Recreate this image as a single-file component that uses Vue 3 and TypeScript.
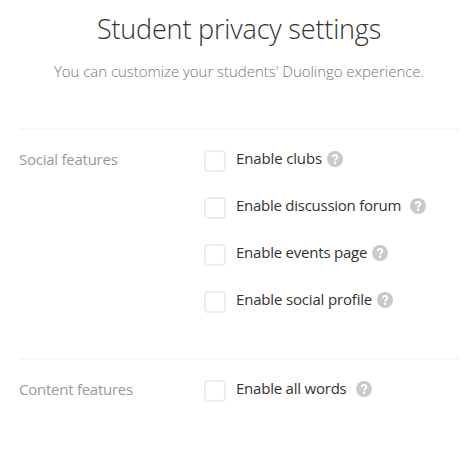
<script setup lang="ts">
interface Option {
  id: string
  label: string
  spaced?: boolean
}

interface Section {
  title: string
  options: Option[]
}

const sections: Section[] = [
  {
    title: 'Social features',
    options: [
      { id: 'clubs', label: 'Enable clubs' },
      { id: 'forum', label: 'Enable discussion forum', spaced: true },
      { id: 'events', label: 'Enable events page' },
      { id: 'profile', label: 'Enable social profile' },
    ],
  },
  {
    title: 'Content features',
    options: [{ id: 'words', label: 'Enable all words', spaced: true }],
  },
]
</script>

<template>
  <main class="page">
    <h1 class="title">Student privacy settings</h1>
    <p class="subtitle">You can customize your students' Duolingo experience.</p>
    <section v-for="section in sections" :key="section.title" class="section">
      <h2 class="section-title">{{ section.title }}</h2>
      <div class="options">
        <div v-for="option in section.options" :key="option.id" class="option">
          <input :id="option.id" type="checkbox" class="box" />
          <label :for="option.id" class="label" :class="[option.id, { spaced: option.spaced }]">{{ option.label }}</label>
          <svg class="help" viewBox="0 0 16 16" aria-hidden="true">
            <circle cx="8" cy="8" r="8" fill="#c9c9c9" />
            <path d="M5.7 6.2C5.8 4.7 6.6 4 8 4c1.4 0 2.3.8 2.3 2 0 1.7-2.2 1.7-2.2 3.5" fill="none" stroke="#fff" stroke-width="2" />
            <circle cx="8.1" cy="11.8" r="1.25" fill="#fff" />
          </svg>
        </div>
      </div>
    </section>
  </main>
</template>

<style>
body {
  background: #fff;
}
</style>

<style scoped>
.page {
  box-sizing: border-box;
  width: 467px;
  height: 459px;
  padding: 12px 8px 0 19px;
  overflow: hidden;
  font-family: 'Open Sans', 'Noto Sans', sans-serif;
  color: #333;
}

.title {
  margin: 0;
  font-size: 27px;
  font-weight: 300;
  line-height: 34px;
  letter-spacing: -0.17px;
  text-align: center;
  white-space: nowrap;
}

.subtitle {
  margin: 14px 0 0;
  font-size: 15px;
  font-weight: 300;
  line-height: 22px;
  letter-spacing: -0.04px;
  text-align: center;
  white-space: nowrap;
  color: #777;
}

.section {
  display: flex;
  height: 228px;
  border-top: 2px solid #f7f7f7;
}

.subtitle + .section {
  margin-top: 46px;
}

.section-title {
  width: 185px;
  margin: 18px 0 0;
  font-size: 15px;
  font-weight: 400;
  line-height: 22px;
  letter-spacing: -0.25px;
  color: #999;
}

.options {
  display: flex;
  flex-direction: column;
  gap: 25px;
  padding-top: 20px;
}

.option {
  display: flex;
  align-items: flex-start;
  height: 22px;
}

.box {
  flex: none;
  box-sizing: border-box;
  width: 22px;
  height: 22px;
  margin: 0 10px 0 0;
  appearance: none;
  background: #fff;
  border: 2px solid #ededed;
  border-radius: 4px;
}

.label {
  margin: -2px 5px 0 0;
  font-size: 15px;
  line-height: 20px;
  letter-spacing: -0.22px;
  white-space: nowrap;
}

.label.clubs {
  letter-spacing: -0.14px;
}

.label.forum {
  letter-spacing: -0.26px;
}

.label.profile {
  letter-spacing: -0.17px;
}

.label.spaced {
  margin-right: 9px;
}

.help {
  flex: none;
  width: 16px;
  height: 16px;
  margin-top: 1px;
}
</style>
